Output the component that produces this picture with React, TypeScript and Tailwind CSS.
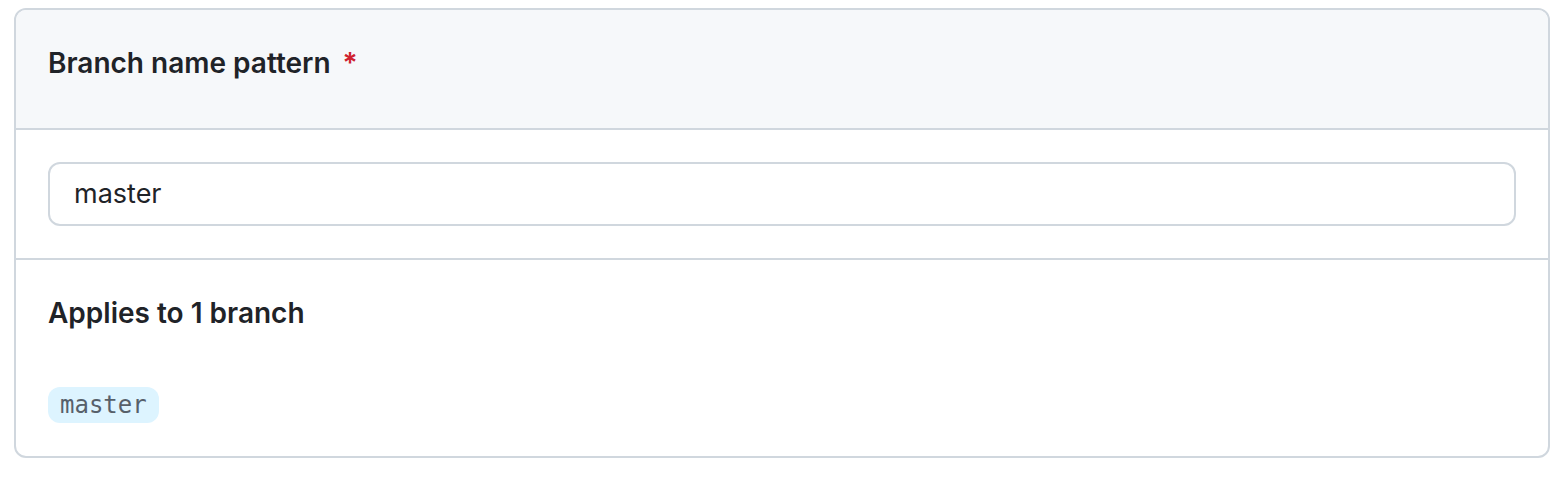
export default function App() {
  return (
    <div className="min-h-[480px] bg-white pt-2 pl-[14px] pr-[6px]" style={{ fontFamily: 'Inter, "Noto Sans", sans-serif' }}>
      <div className="w-[1536px] h-[450px] rounded-[12px] border-2 border-[#d0d7de] overflow-hidden flex flex-col">
        <div className="h-[120px] shrink-0 bg-[#f6f8fa] border-b-2 border-[#d0d7de] flex items-center pl-8 pb-[12px]">
          <span className="text-[28px] font-semibold text-[#1f2328] leading-[34px]">Branch name pattern</span>
          <span className="ml-[12px] text-[28px] font-semibold text-[#cf222e] leading-[34px]">*</span>
        </div>
        <div className="h-[130px] shrink-0 border-b-2 border-[#d0d7de] px-8 flex items-center">
          <div className="w-full h-[64px] rounded-[12px] border-2 border-[#d0d7de] flex items-center pl-6">
            <span className="text-[27px] text-[#1f2328]">master</span>
          </div>
        </div>
        <div className="flex-1 px-8 pt-[36px]">
          <div className="text-[28px] font-semibold text-[#1f2328] leading-[34px]">Applies to 1 branch</div>
          <div className="mt-[57px] inline-flex h-[36px] items-center rounded-[12px] bg-[#ddf4ff] px-3">
            <span className="text-[24px] text-[#57606a] leading-[30px]" style={{ fontFamily: '"DejaVu Sans Mono", monospace' }}>master</span>
          </div>
        </div>
      </div>
    </div>
  );
}
